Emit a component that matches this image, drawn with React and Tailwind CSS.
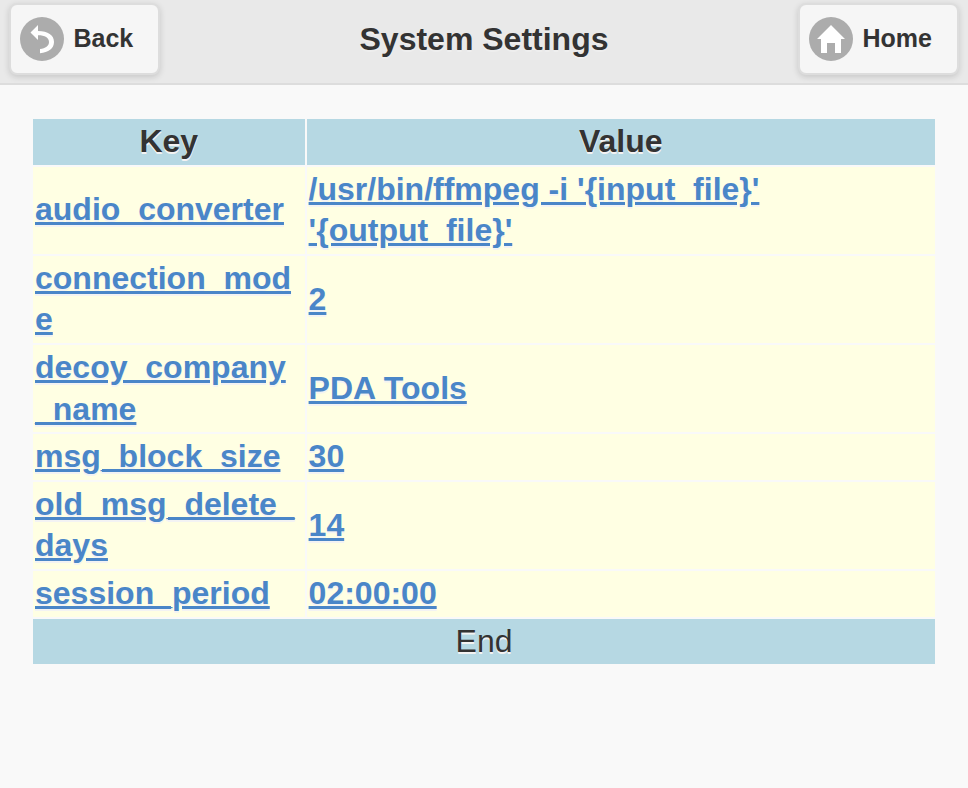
const settings = [
  { key: 'audio_converter', value: "/usr/bin/ffmpeg -i '{input_file}' '{output_file}'" },
  { key: 'connection_mode', value: '2' },
  { key: 'decoy_company_name', value: 'PDA Tools' },
  { key: 'msg_block_size', value: '30' },
  { key: 'old_msg_delete_days', value: '14' },
  { key: 'session_period', value: '02:00:00' },
];

function BackIcon() {
  return (
    <svg viewBox="0 0 44 44" className="size-11" fill="#fff">
      <path d="M18 8L10.500 15.500L18 23V18.300C25 18.300 29 21 29 25C29 29 25.500 31.500 20 32V36.200C28.500 35.600 34 31.500 34 25C34 18 28 14 18 14Z" />
    </svg>
  );
}

function HomeIcon() {
  return (
    <svg viewBox="0 0 44 44" className="size-11" fill="#fff">
      <polygon points="22,8 8,22 12,22 12,36 18,36 18,26 26,26 26,36 32,36 32,22 36,22" />
    </svg>
  );
}

function HeaderButton({ label, className, children }) {
  return (
    <button
      className={`flex h-[72px] items-center rounded-[8px] border-2 border-[#ddd] bg-[#f6f6f6] pl-[9px] text-[25px] font-bold leading-none shadow-[0_2px_6px_rgba(0,0,0,0.15)] [text-shadow:0_2px_0_#f3f3f3] ${className}`}
    >
      <span className="flex size-11 items-center justify-center rounded-full bg-[#acacac]">{children}</span>
      <span className="pb-[2px]">{label}</span>
    </button>
  );
}

const cell = 'border-2 border-[#f9f9f9] p-[2px]';
const link = 'font-bold text-[#4a86c8] underline';

export default function App() {
  return (
    <div className="min-h-screen bg-[#f9f9f9] font-['Liberation_Sans',Arial,sans-serif] text-[32px] leading-[1.3] text-[#333] [text-shadow:0_2px_0_#f3f3f3]">
      <header className="flex h-[85px] items-start justify-between border-b-2 border-[#ddd] bg-[#e9e9e9] px-[9px] pt-[3px]">
        <HeaderButton label="Back" className="w-[151px] gap-[9.5px]">
          <BackIcon />
        </HeaderButton>
        <h1 className="ml-[10px] pt-4 text-[32px] font-bold [text-shadow:0_2px_0_#eee]">System Settings</h1>
        <HeaderButton label="Home" className="w-[161px] gap-[9.5px]">
          <HomeIcon />
        </HeaderButton>
      </header>

      <main className="px-[31px] pt-8">
        <table className="w-full table-fixed border-collapse">
          <colgroup>
            <col className="w-[273.6px]" />
            <col />
          </colgroup>
          <thead>
            <tr className="bg-[#b6d8e3]">
              <th className={cell}>Key</th>
              <th className={cell}>Value</th>
            </tr>
          </thead>
          <tbody>
            {settings.map((s) => (
              <tr key={s.key} className="bg-[#ffffe3]">
                <td className={`${cell} break-words`}>
                  <a href="#" className={link}>{s.key}</a>
                </td>
                <td className={cell}>
                  <a href="#" className={link}>{s.value}</a>
                </td>
              </tr>
            ))}
          </tbody>
          <tfoot>
            <tr className="bg-[#b6d8e3]">
              <td colSpan={2} className={`${cell} text-center`}>End</td>
            </tr>
          </tfoot>
        </table>
      </main>
    </div>
  );
}
